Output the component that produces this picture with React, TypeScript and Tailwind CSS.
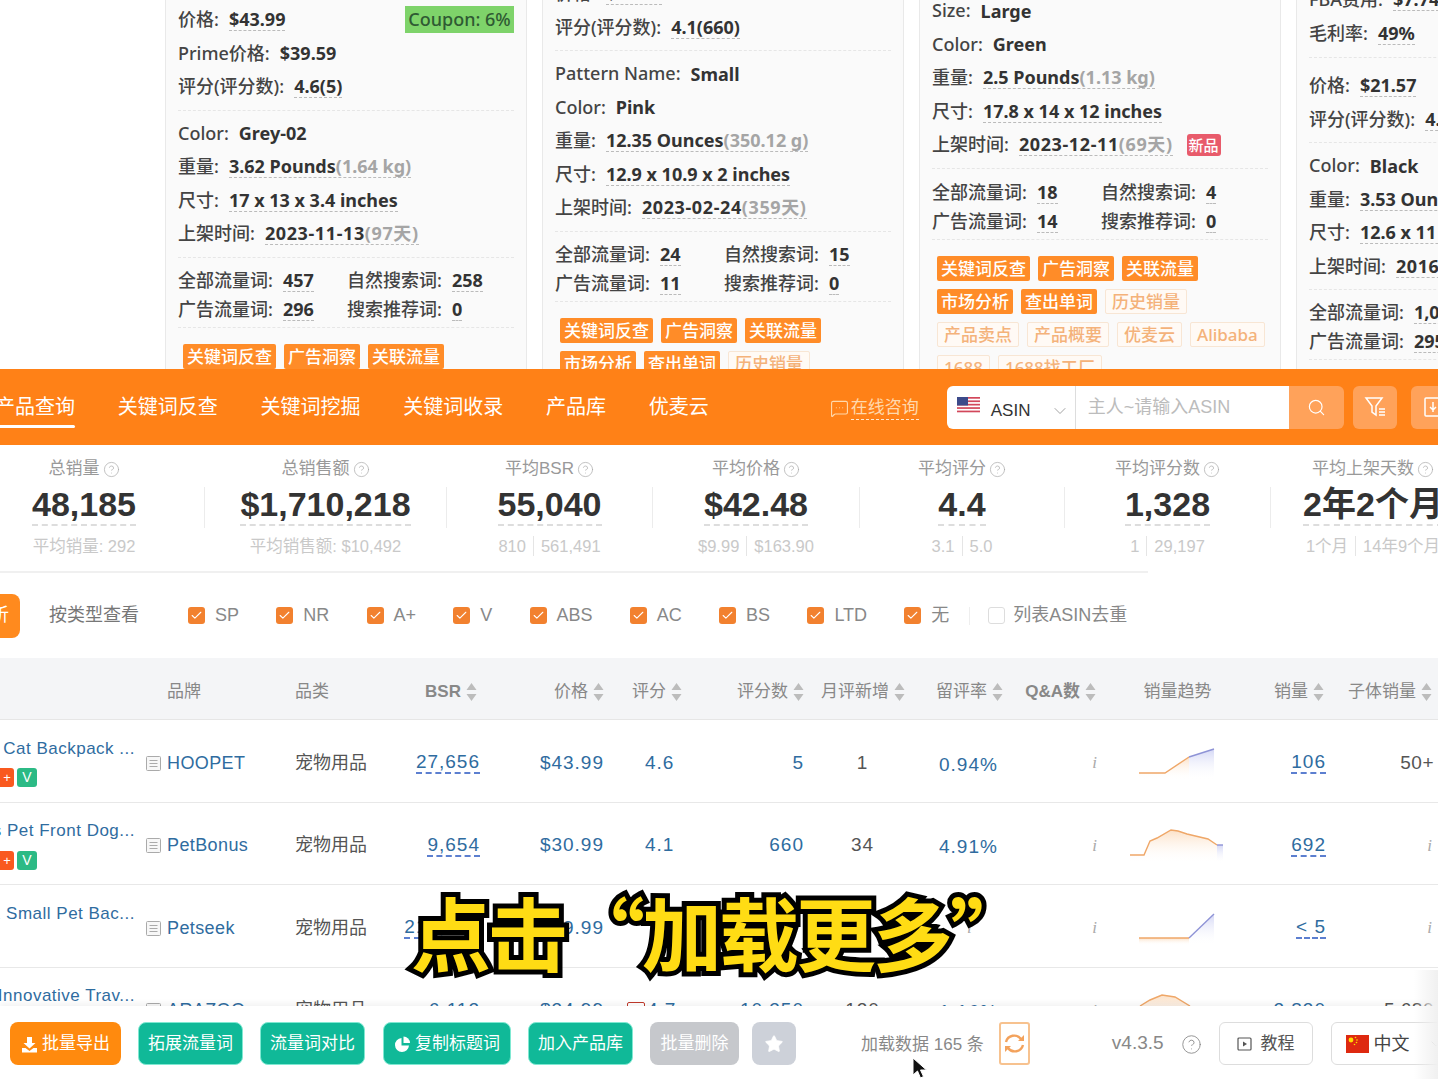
import { Check, ChevronDown, CircleHelp, MessageSquareMore, Search, Star } from "lucide-react"

const cardFont = "font-['Noto_Sans','Noto_Sans_CJK_SC',sans-serif]"
const rowGrid = "grid grid-cols-[146px_149px_105px_80px_124px_116px_84px_118px_93px_85px_155px_72px_109px]"

type Line = { label: string; value: string; muted?: string; isNew?: boolean; coupon?: boolean; plain?: boolean; wide?: boolean }

function InfoLine({ label, value, muted, isNew, coupon, plain, wide }: Line) {
  return (
    <div className="flex h-[33.5px] items-center whitespace-nowrap text-[18px] font-medium text-[#444]">
      <span>{label}:</span>
      <span className={`ml-[10px] font-bold leading-[22px] text-[#333] ${plain ? "" : "border-b border-dashed border-[#bbb]"} ${wide ? "tracking-[0.6px]" : ""}`}>
        {value}
        {muted && <span className="text-[#a5a5a5]">{muted}</span>}
      </span>
      {isNew && <span className="ml-[14px] rounded-[3px] bg-[#e85b6b] px-[2px] text-[15px] leading-[22px] text-white">新品</span>}
      {coupon && <span className="ml-auto h-[27px] w-[109px] bg-[#7ed36a] text-center text-[18px] leading-[27px] text-[#2f5a33]">Coupon: 6%</span>}
    </div>
  )
}

function Divider({ className = "mt-[6px] mb-[6px]" }: { className?: string }) {
  return <div className={`border-t border-dashed border-[#e6e6e6] ${className}`} />
}

function FlowWords({ values }: { values: string[] }) {
  const labels = ["全部流量词", "自然搜索词", "广告流量词", "搜索推荐词"]
  return (
    <div className="grid grid-cols-[169px_1fr] whitespace-nowrap text-[18px] font-medium text-[#444]">
      {labels.map((label, i) => (
        <div key={label} className="flex h-[29px] items-center">
          <span>{label}:</span>
          <span className="ml-[10px] border-b border-dashed border-[#bbb] font-bold leading-[22px] text-[#333]">{values[i]}</span>
        </div>
      ))}
    </div>
  )
}

function Tags({ solid, outline = [] }: { solid: string[]; outline?: string[] }) {
  return (
    <div className="flex flex-wrap gap-x-[8px] gap-y-[8px] pl-[5px] text-[17px] font-medium">
      {solid.map((t) => (
        <span key={t} className="h-[25px] rounded-[2px] bg-[#ff8c28] px-[4px] leading-[25px] text-white">{t}</span>
      ))}
      {outline.map((t) => (
        <span key={t} className="h-[25px] rounded-[2px] border border-[#f8e6d4] bg-[#fffaf5] px-[6px] leading-[23px] text-[#f4b27a]">{t}</span>
      ))}
    </div>
  )
}

function Card({ className, children }: { className: string; children: React.ReactNode }) {
  return (
    <div className={`h-[600px] w-[362px] shrink-0 border-x border-[#e9e9e9] bg-[#fafafa] px-[12px] ${cardFont} ${className}`}>
      {children}
    </div>
  )
}

function ProductCards() {
  const solid = ["关键词反查", "广告洞察", "关联流量", "市场分析", "查出单词"]
  const outline = ["历史销量", "产品卖点", "产品概要", "优麦云", "Alibaba", "1688", "1688找工厂"]
  return (
    <div className="flex h-[369px] items-start gap-[15px] overflow-hidden bg-white pl-[165px]">
      <Card className="pt-[3px]">
        <InfoLine label="价格" value="$43.99" coupon />
        <InfoLine label="Prime价格" value="$39.59" plain />
        <InfoLine label="评分(评分数)" value="4.6(5)" />
        <Divider />
        <InfoLine label="Color" value="Grey-02" plain />
        <InfoLine label="重量" value="3.62 Pounds" muted="(1.64 kg)" />
        <InfoLine label="尺寸" value="17 x 13 x 3.4 inches" />
        <InfoLine label="上架时间" value="2023-11-13" muted="(97天)" wide />
        <Divider className="mt-[6px] mb-[8px]" />
        <FlowWords values={["457", "258", "296", "0"]} />
        <Divider className="mt-[3px] mb-[16px]" />
        <Tags solid={solid} outline={outline} />
      </Card>
      <Card className="mt-[-23px]">
        <InfoLine label="价格" value="$30.99" />
        <InfoLine label="评分(评分数)" value="4.1(660)" />
        <Divider />
        <InfoLine label="Pattern Name" value="Small" plain />
        <InfoLine label="Color" value="Pink" plain />
        <InfoLine label="重量" value="12.35 Ounces" muted="(350.12 g)" />
        <InfoLine label="尺寸" value="12.9 x 10.9 x 2 inches" />
        <InfoLine label="上架时间" value="2023-02-24" muted="(359天)" wide />
        <Divider className="mt-[6px] mb-[8px]" />
        <FlowWords values={["24", "15", "11", "0"]} />
        <Divider className="mt-[3px] mb-[16px]" />
        <Tags solid={solid} outline={outline} />
      </Card>
      <Card className="mt-[-6px]">
        <InfoLine label="Size" value="Large" plain />
        <InfoLine label="Color" value="Green" plain />
        <InfoLine label="重量" value="2.5 Pounds" muted="(1.13 kg)" />
        <InfoLine label="尺寸" value="17.8 x 14 x 12 inches" />
        <InfoLine label="上架时间" value="2023-12-11" muted="(69天)" isNew wide />
        <Divider className="mt-[6px] mb-[9px]" />
        <FlowWords values={["18", "4", "14", "0"]} />
        <Divider className="mt-[3px] mb-[16px]" />
        <Tags solid={solid} outline={outline} />
      </Card>
      <Card className="mt-[-17px]">
        <InfoLine label="FBA费用" value="$7.74" />
        <InfoLine label="毛利率" value="49%" />
        <Divider className="mt-[7px] mb-[11px]" />
        <InfoLine label="价格" value="$21.57" />
        <InfoLine label="评分(评分数)" value="4.5(295)" />
        <Divider />
        <InfoLine label="Color" value="Black" plain />
        <InfoLine label="重量" value="3.53 Ounces" />
        <InfoLine label="尺寸" value="12.6 x 11 x 8 inches" />
        <InfoLine label="上架时间" value="2016-08-02" wide />
        <Divider className="mt-[6px] mb-[8px]" />
        <FlowWords values={["1,052", "757", "295", "0"]} />
        <Divider className="mt-[3px] mb-[16px]" />
      </Card>
    </div>
  )
}

function UsFlag() {
  return (
    <svg width="23" height="17" viewBox="0 0 23 17" className="mb-[3px] shrink-0">
      <rect width="23" height="17" fill="#fff" />
      {[0, 3.4, 6.8, 10.2, 13.6].map((y) => (
        <rect key={y} y={y} width="23" height="1.7" fill="#d2475a" />
      ))}
      <rect width="11" height="8.5" fill="#3c4a8a" />
    </svg>
  )
}

function CnFlag() {
  return (
    <svg width="23" height="18" viewBox="0 0 23 18" className="shrink-0">
      <rect width="23" height="18" fill="#de2910" />
      <circle cx="5" cy="5" r="2.4" fill="#ffde00" />
      <circle cx="9.5" cy="2.5" r="0.8" fill="#ffde00" />
      <circle cx="11" cy="5" r="0.8" fill="#ffde00" />
      <circle cx="10.5" cy="7.5" r="0.8" fill="#ffde00" />
      <circle cx="8.5" cy="9.5" r="0.8" fill="#ffde00" />
    </svg>
  )
}

function NavBar() {
  const items = ["产品查询", "关键词反查", "关键词挖掘", "关键词收录", "产品库", "优麦云"]
  return (
    <div className="flex h-[76px] items-center overflow-hidden bg-[#ff8117] font-['Liberation_Sans','Noto_Sans_CJK_SC',sans-serif]">
      <nav className="ml-[-5px] flex shrink-0 gap-[42.75px] text-[20px] text-white">
        {items.map((item, i) => (
          <span key={item} className="relative whitespace-nowrap">
            {item}
            {i === 0 && <span className="absolute bottom-[-6px] left-0 h-[3px] w-full rounded-full bg-white" />}
          </span>
        ))}
      </nav>
      <div className="ml-[121px] mt-[2px] flex shrink-0 items-center gap-[2px] text-[17px] text-[#ffd9ad]">
        <MessageSquareMore size={19} strokeWidth={1.4} />
        <span className="border-b border-dashed border-[#ffe7cc] leading-[22px]">在线咨询</span>
      </div>
      <div className="ml-[28px] flex h-[43px] w-[342px] shrink-0 items-center rounded-l-md bg-white">
        <div className="flex h-full w-[129px] items-center border-r border-[#ddd] pl-[10px]">
          <UsFlag />
          <span className="ml-[11px] mt-[7px] text-[17px] text-[#333]">ASIN</span>
          <ChevronDown size={20} strokeWidth={1.1} className="ml-[20px] mt-[7px] text-[#999]" />
        </div>
        <span className="pl-[12px] text-[18px] text-[#bcbcbc]">主人~请输入ASIN</span>
      </div>
      <div className="flex h-[43px] w-[55px] shrink-0 items-center justify-center rounded-r-md bg-[#ffa25a] text-white">
        <Search size={19} strokeWidth={1.5} />
      </div>
      <div className="ml-[9px] flex h-[43px] w-[44px] shrink-0 items-center justify-center rounded-md bg-[#ffa25a] text-white">
        <svg width="22" height="24" viewBox="0 0 22 24" fill="none" stroke="currentColor" strokeWidth="1.5">
          <path d="M2 3h16l-6 8v9l-4-3v-6z" />
          <path d="M15 14h6M15 17h6M15 20h6" />
        </svg>
      </div>
      <div className="ml-[14px] flex h-[43px] w-[44px] shrink-0 items-center justify-center rounded-md bg-[#ffa25a] text-white">
        <svg width="22" height="24" viewBox="0 0 22 24" fill="none" stroke="currentColor" strokeWidth="1.5">
          <rect x="3" y="3" width="16" height="18" rx="1" />
          <path d="M11 7v10M8 12l3 3 3-3" />
        </svg>
      </div>
    </div>
  )
}

function StatDivider() {
  return <div className="mt-[42px] h-[41px] w-px shrink-0 bg-[#ececec]" />
}

function Stat({ title, value, sub, width }: { title: string; value: string; sub: string[]; width: string }) {
  return (
    <div className={`flex shrink-0 flex-col items-center pt-[13px] ${width}`}>
      <div className="flex h-[22px] items-center gap-[3px] whitespace-nowrap text-[17px] leading-[22px] text-[#999]">
        {title}
        <CircleHelp size={17} strokeWidth={1} className="text-[#aaa]" />
      </div>
      <div className="mt-[4px] whitespace-nowrap border-b-2 border-dashed border-[#ddd] text-[34px] font-bold leading-[40px] text-[#333]">{value}</div>
      <div className="mt-[10px] flex items-center whitespace-nowrap text-[16.5px] leading-[20px] text-[#c9c9c9]">
        {sub.map((s, i) => (
          <span key={s} className={i > 0 ? "ml-[7px] border-l border-[#e5e5e5] pl-[7px]" : ""}>{s}</span>
        ))}
      </div>
    </div>
  )
}

function StatsRow() {
  return (
    <div className="ml-[-36px] flex h-[126px] font-['Liberation_Sans','Noto_Sans_CJK_SC',sans-serif]">
      <Stat width="w-[240px]" title="总销量" value="48,185" sub={["平均销量: 292"]} />
      <StatDivider />
      <Stat width="w-[241px]" title="总销售额" value="$1,710,218" sub={["平均销售额: $10,492"]} />
      <StatDivider />
      <Stat width="w-[205px]" title="平均BSR" value="55,040" sub={["810", "561,491"]} />
      <StatDivider />
      <Stat width="w-[206px]" title="平均价格" value="$42.48" sub={["$9.99", "$163.90"]} />
      <StatDivider />
      <Stat width="w-[204px]" title="平均评分" value="4.4" sub={["3.1", "5.0"]} />
      <StatDivider />
      <Stat width="w-[205px]" title="平均评分数" value="1,328" sub={["1", "29,197"]} />
      <StatDivider />
      <Stat width="w-[204px]" title="平均上架天数" value="2年2个月" sub={["1个月", "14年9个月"]} />
    </div>
  )
}

function FilterCheck({ label, checked = true }: { label: string; checked?: boolean }) {
  return (
    <label className={`flex items-center whitespace-nowrap ${checked ? "gap-[10px]" : "gap-[8px]"}`}>
      <span className={`flex h-[17px] w-[17px] items-center justify-center rounded-[3px] ${checked ? "bg-[#f2812f] text-white" : "border border-[#ddd] bg-white"}`}>
        {checked && <Check size={13} strokeWidth={2} />}
      </span>
      {label}
    </label>
  )
}

function FilterRow() {
  return (
    <div className="font-['Liberation_Sans','Noto_Sans_CJK_SC',sans-serif]">
      <div className="h-[2px] w-[1148px] bg-[#f0f0f0]" />
      <div className="flex h-[85px] items-center text-[18px] text-[#888]">
        <span className="ml-[-18px] flex h-[44px] w-[38px] items-center justify-end rounded-r-lg bg-[#ff8a1e] pr-[11px] text-white">析</span>
        <span className="ml-[29px] text-[#777]">按类型查看</span>
        <div className="ml-[49px] flex items-center gap-[37.25px]">
          {["SP", "NR", "A+", "V", "ABS", "AC", "BS", "LTD", "无"].map((t) => (
            <FilterCheck key={t} label={t} />
          ))}
        </div>
        <div className="ml-[20px] h-[18px] w-px bg-[#eee]" />
        <div className="ml-[18px]">
          <FilterCheck label="列表ASIN去重" checked={false} />
        </div>
      </div>
    </div>
  )
}

function SortArrows() {
  return (
    <svg width="11" height="20" viewBox="0 0 11 20" className="ml-[5px] shrink-0" fill="#bcbcbc">
      <path d="M5.5 1l5 7h-10z" />
      <path d="M5.5 19l5-7h-10z" />
    </svg>
  )
}

function HeaderCell({ label, className, sort = true }: { label: string; className: string; sort?: boolean }) {
  return (
    <div className={`flex items-center whitespace-nowrap pt-[6px] ${className}`}>
      {label}
      {sort && <SortArrows />}
    </div>
  )
}

function TableHeader() {
  return (
    <div className={`${rowGrid} h-[62px] border-b border-[#e6e6e6] bg-[#f4f5f7] text-[17px] text-[#888]`}>
      <div />
      <HeaderCell label="品牌" className="pl-[21px]" sort={false} />
      <HeaderCell label="品类" className="" sort={false} />
      <HeaderCell label="BSR" className="justify-end pr-[3px] font-semibold" />
      <HeaderCell label="价格" className="justify-end" />
      <HeaderCell label="评分" className="pl-[28px]" />
      <HeaderCell label="评分数" className="justify-end" />
      <HeaderCell label="月评新增" className="justify-center" />
      <HeaderCell label="留评率" className="pl-[14px]" />
      <HeaderCell label="Q&A数" className="justify-end pr-[4px] font-semibold" />
      <HeaderCell label="销量趋势" className="justify-center" sort={false} />
      <HeaderCell label="销量" className="justify-end pr-[3px]" />
      <HeaderCell label="子体销量" className="justify-end pr-[4px]" />
    </div>
  )
}

function Sparkline({ warm, cool }: { warm: string; cool?: string }) {
  const warmEnd = warm.split(" ").slice(-1)[0]
  const startX = warm.split(" ")[0].split(",")[0]
  const warmEndX = warmEnd.split(",")[0]
  const coolEndX = cool ? cool.split(",")[0] : warmEndX
  return (
    <svg width="155" height="83" viewBox="0 0 155 83" className="mt-[-3px]">
      <defs>
        <linearGradient id="spark" x1="0" x2="0" y1="0" y2="1">
          <stop offset="0%" stopColor="#fbd9b8" stopOpacity="0.8" />
          <stop offset="100%" stopColor="#fff" stopOpacity="0" />
        </linearGradient>
        <linearGradient id="sparkCool" x1="0" x2="0" y1="0" y2="1">
          <stop offset="0%" stopColor="#c9cdf3" stopOpacity="0.8" />
          <stop offset="100%" stopColor="#fff" stopOpacity="0" />
        </linearGradient>
      </defs>
      <polygon points={`${startX},60 ${warm} ${warmEndX},60`} fill="url(#spark)" />
      {cool && <polygon points={`${warmEndX},60 ${warmEnd} ${cool} ${coolEndX},60`} fill="url(#sparkCool)" />}
      <polyline points={warm} fill="none" stroke="#efa768" strokeWidth="1.4" />
      {cool && <polyline points={`${warmEnd} ${cool}`} fill="none" stroke="#8e93d6" strokeWidth="1.4" />}
    </svg>
  )
}

type Row = {
  title: string
  badges?: boolean
  brand: string
  bsr: string
  price: string
  rating: string
  ratingBox?: boolean
  reviews: string
  monthly: string
  rate: string
  warm: string
  cool?: string
  sales: string
  variant: string
}

const rows: Row[] = [
  { title: "Cat Backpack ...", badges: true, brand: "HOOPET", bsr: "27,656", price: "$43.99", rating: "4.6", reviews: "5", monthly: "1", rate: "0.94%", warm: "39,53 65,53 89,37", cool: "114,29", sales: "106", variant: "50+" },
  { title: "s Pet Front Dog...", badges: true, brand: "PetBonus", bsr: "9,654", price: "$30.99", rating: "4.1", reviews: "660", monthly: "34", rate: "4.91%", warm: "30,52 44,52 50,38 57,35 71,27 78,28 87,31 108,36 117,42", cool: "123,42", sales: "692", variant: "i" },
  { title: "E Small Pet Bac...", brand: "Petseek", bsr: "216,308", price: "$29.99", rating: "", reviews: "", monthly: "", rate: "i", warm: "39,53 89,53", cool: "114,29", sales: "< 5", variant: "i" },
  { title: "Innovative Trav...", brand: "ARAZOO", bsr: "6,112", price: "$34.99", rating: "4.7", ratingBox: true, reviews: "10,350", monthly: "120", rate: "1.16%", warm: "40,38 50,32 62,27 75,29 90,38", sales: "2,830", variant: "5,680" },
]

function TableRow({ row }: { row: Row }) {
  const blue = "text-[#2f6c9f]"
  const num = `text-[19px] tracking-[1px] ${blue}`
  return (
    <div className={`${rowGrid} h-[82.5px] shrink-0 items-center border-b border-[#e8e8e8] bg-white pt-[3px]`}>
      <div className="mb-[3px] flex flex-col items-end pr-[11px]">
        <span className={`whitespace-nowrap text-[17px] tracking-[0.5px] ${blue}`}>{row.title}</span>
        {row.badges ? (
          <div className="mt-[7px] flex w-full justify-start gap-[3px]">
            <span className="h-[19px] w-[14px] rounded-r-[3px] bg-[#f9591f] text-center text-[13px] leading-[19px] text-white">+</span>
            <span className="h-[19px] w-[20px] rounded-[3px] bg-[#2cba85] text-center text-[14px] leading-[19px] text-white">V</span>
          </div>
        ) : (
          <div className="h-[26px]" />
        )}
      </div>
      <div className={`flex items-center gap-[6px] text-[18px] tracking-[0.4px] ${blue}`}>
        <svg width="15" height="15" viewBox="0 0 15 15" fill="#f7f7f7" stroke="#aaa" strokeWidth="1" className="shrink-0">
          <rect x="0.5" y="0.5" width="14" height="14" rx="1" />
          <path d="M3.5 4.5h8M3.5 7.5h8M3.5 10.5h8" />
        </svg>
        {row.brand}
      </div>
      <div className="text-[18px] text-[#555]">宠物用品</div>
      <div className="flex justify-end">
        <span className={`whitespace-nowrap border-b-2 border-dashed border-[#5c7fd0] leading-[20px] ${num}`}>{row.bsr}</span>
      </div>
      <div className={`text-right ${num}`}>{row.price}</div>
      <div className={`flex items-center pl-[41px] ${num}`}>
        {row.ratingBox && <span className="ml-[-18px] mr-[2px] h-[18px] w-[18px] rounded-[2px] border border-[#c0392b]" />}
        {row.rating}
      </div>
      <div className={`text-right ${num}`}>{row.reviews}</div>
      <div className="pr-[1px] text-center text-[19px] tracking-[1px] text-[#555]">{row.monthly}</div>
      <div className={row.rate === "i" ? "pl-[45px] font-['Liberation_Serif',serif] text-[17px] italic text-[#aaa]" : `mt-[4px] pl-[17px] ${num}`}>{row.rate}</div>
      <div className="pr-[3px] text-right font-['Liberation_Serif',serif] text-[17px] italic text-[#aaa]">i</div>
      <Sparkline warm={row.warm} cool={row.cool} />
      <div className="flex justify-end pr-[1px]">
        <span className={`whitespace-nowrap border-b-2 border-dashed border-[#5c7fd0] leading-[20px] ${num}`}>{row.sales}</span>
      </div>
      <div className={row.variant === "i" ? "pr-[4px] text-right font-['Liberation_Serif',serif] text-[17px] italic text-[#aaa]" : "whitespace-nowrap pr-[2px] text-right text-[19px] tracking-[0.5px] text-[#555]"}>
        {row.variant}
      </div>
    </div>
  )
}

function ActionButton({ children, className }: { children: React.ReactNode; className: string }) {
  return (
    <button className={`mt-[1px] flex h-[43px] shrink-0 items-center justify-center gap-[4px] whitespace-nowrap rounded-lg pt-[1px] text-[17px] text-white ${className}`}>
      {children}
    </button>
  )
}

function BottomBar() {
  const green = "border border-[#7fe9d2] bg-[#10b998] px-[9px]"
  return (
    <div className="relative z-10 flex h-[74px] items-center bg-white pl-[10px] shadow-[0_-3px_6px_rgba(0,0,0,0.05)] font-['Liberation_Sans','Noto_Sans_CJK_SC',sans-serif]">
      <ActionButton className="w-[111px] bg-[#ff8a0e]">
        <svg width="17" height="17" viewBox="0 0 17 17" fill="#fff">
          <path d="M6 1h5v6h3.5L8.5 12.5 2.5 7H6z" />
          <path d="M1 12h3.5l4 3 4-3H16v4.5H1z" />
        </svg>
        批量导出
      </ActionButton>
      <ActionButton className={`ml-[17px] ${green}`}>拓展流量词</ActionButton>
      <ActionButton className={`ml-[17px] ${green}`}>流量词对比</ActionButton>
      <ActionButton className={`ml-[18px] w-[128px] ${green}`}>
        <svg width="17" height="17" viewBox="0 0 17 17" fill="#fff">
          <path d="M7.5 2a7 7 0 1 0 7.5 7.5H7.5z" />
          <path d="M9.5 0.5v6.5h6.5a6.5 6.5 0 0 0-6.5-6.5z" />
        </svg>
        复制标题词
      </ActionButton>
      <ActionButton className={`ml-[17px] ${green}`}>加入产品库</ActionButton>
      <ActionButton className="ml-[17px] w-[89px] bg-[#c6c8cc]">批量删除</ActionButton>
      <ActionButton className="ml-[13px] w-[44px] bg-[#cdd1d9]">
        <Star size={20} fill="#fff" strokeWidth={1} />
      </ActionButton>
      <span className="ml-[65px] mt-[3px] whitespace-nowrap text-[17px] text-[#888]">加载数据 165 条</span>
      <button className="ml-[15px] mt-[1px] flex h-[43px] w-[31px] shrink-0 items-center justify-center rounded-[3px] border-2 border-[#f7c28f]">
        <svg width="23" height="23" viewBox="0 0 23 23" fill="none" stroke="#f3a25c" strokeWidth="2.4">
          <path d="M3 10a8.5 8.5 0 0 1 15-3" />
          <path d="M20 13a8.5 8.5 0 0 1-15 3" />
          <path d="M21 3v6h-6z" fill="#f3a25c" strokeWidth="0" />
          <path d="M2 20v-6h6z" fill="#f3a25c" strokeWidth="0" />
        </svg>
      </button>
      <span className="ml-[82px] mt-[1px] text-[19px] text-[#888]">v4.3.5</span>
      <CircleHelp size={21} strokeWidth={1} className="ml-[17px] mt-[3px] shrink-0 text-[#888]" />
      <button className="ml-[17px] mt-[1px] flex h-[43px] w-[94px] shrink-0 items-center justify-center gap-[9px] rounded-md border border-[#ddd] text-[17px] text-[#555]">
        <svg width="15" height="14" viewBox="0 0 15 14" fill="none" stroke="#555" strokeWidth="1.2">
          <rect x="1" y="1" width="13" height="12" rx="1" />
          <path d="M6 4.5l4 2.5-4 2.5z" fill="#555" stroke="none" />
        </svg>
        教程
      </button>
      <button className="ml-[18px] mt-[1px] flex h-[43px] w-[130px] shrink-0 items-center rounded-md border border-[#ddd] pl-[14px] text-[18px] text-[#444]">
        <CnFlag />
        <span className="ml-[5px] mt-[2px]">中文</span>
        <ChevronDown size={16} strokeWidth={1} className="ml-[18px] text-[#aaa]" />
      </button>
    </div>
  )
}

export default function App() {
  return (
    <div className="relative h-[1079px] w-[1438px] overflow-hidden bg-white font-['Liberation_Sans','Noto_Sans_CJK_SC',sans-serif]">
      <ProductCards />
      <NavBar />
      <StatsRow />
      <FilterRow />
      <TableHeader />
      <div className="flex h-[286px] flex-col overflow-hidden">
        {rows.map((row) => (
          <TableRow key={row.brand} row={row} />
        ))}
      </div>
      <BottomBar />
      {/* 视频字幕 */}
      <div className="absolute left-[411px] top-[875px] z-20 whitespace-nowrap font-['Noto_Sans_CJK_SC',sans-serif] text-[80px] font-bold leading-[110px] tracking-[-3px] text-[#ffdc14] [-webkit-text-stroke:10px_#000] [paint-order:stroke_fill]">
        点击“加载更多”
      </div>
      <div className="absolute right-0 top-[970px] z-20 h-[109px] w-[24px] bg-gradient-to-l from-[#f0f0f0] to-transparent" />
      <svg width="18" height="24" viewBox="0 0 18 24" className="absolute left-[912px] top-[1057px] z-30">
        <path d="M1 1v17l4.5-4 3 7 3-1.5-3-6.5h6z" fill="#111" stroke="#fff" strokeWidth="1" />
      </svg>
    </div>
  )
}
